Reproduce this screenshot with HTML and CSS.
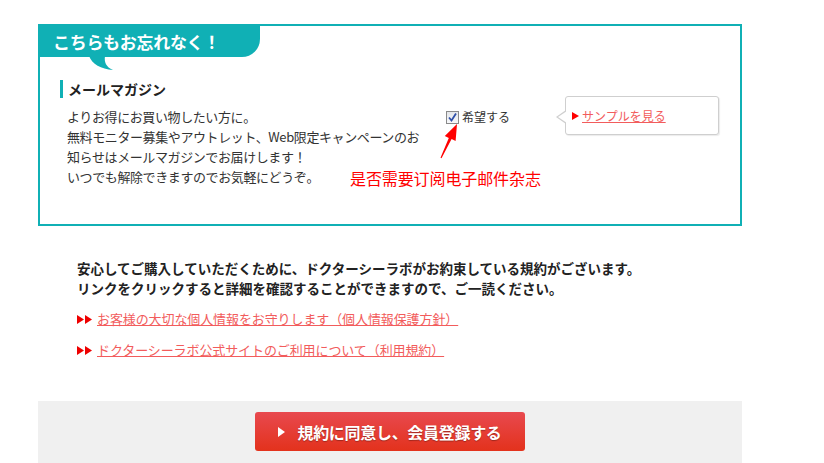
FILE: index.html
```html
<!DOCTYPE html>
<html lang="ja">
<head>
<meta charset="utf-8">
<title>メールマガジン</title>
<link rel="stylesheet" href="styles.css">
</head>
<body>
<div class="page">
  <div class="mm-box">
    <div class="badge">こちらもお忘れなく！</div>
    <svg class="badge-tail" width="26" height="16" viewBox="0 0 26 16"><path d="M0 0 C3 8 12 13 24 14 C17 11 15 6 16 0 Z" fill="#10b0b5"/></svg>
    <div class="mm-content">
      <h3 class="mm-title">メールマガジン</h3>
      <div class="mm-row">
        <p class="mm-text">よりお得にお買い物したい方に。<br>無料モニター募集やアウトレット、Web限定キャンペーンのお<br>知らせはメールマガジンでお届けします！<br>いつでも解除できますのでお気軽にどうぞ。</p>
        <label class="mm-check">
          <span class="cb"><svg width="11" height="11" viewBox="0 0 11 11"><path d="M2 5.5 L4.5 8.5 L9 1.5" fill="none" stroke="#2f4fa8" stroke-width="1.8"/></svg></span>希望する
        </label>
        <div class="sample">
          <span class="tri-red"></span><a href="#" class="sample-link">サンプルを見る</a>
        </div>
      </div>
    </div>
    <svg class="note-arrow" width="24" height="38" viewBox="0 0 24 38"><polygon points="19,2 17.6,19.1 13.6,17.1 3.5,36.2 2.5,35.8 10.8,15.9 6.8,13.9" fill="#ff0000"/></svg>
    <span class="note-text">是否需要订阅电子邮件杂志</span>
  </div>

  <div class="terms">
    <p class="terms-lead">安心してご購入していただくために、ドクターシーラボがお約束している規約がございます。<br>リンクをクリックすると詳細を確認することができますので、ご一読ください。</p>
    <ul class="terms-links">
      <li><span class="tri2"><svg width="16" height="9" viewBox="0 0 16 9"><polygon points="0,0 7,4.5 0,9" fill="#e00"/><polygon points="8,0 15,4.5 8,9" fill="#e00"/></svg></span><a href="#" class="terms-link">お客様の大切な個人情報をお守りします（個人情報保護方針）</a></li>
      <li><span class="tri2"><svg width="16" height="9" viewBox="0 0 16 9"><polygon points="0,0 7,4.5 0,9" fill="#e00"/><polygon points="8,0 15,4.5 8,9" fill="#e00"/></svg></span><a href="#" class="terms-link">ドクターシーラボ公式サイトのご利用について（利用規約）</a></li>
    </ul>
  </div>

  <div class="submit-band">
    <button class="submit-btn" type="button"><span class="tri-white"></span>規約に同意し、会員登録する</button>
  </div>
</div>
</body>
</html>
```

FILE: styles.css
```css
html, body {
  margin: 0;
  padding: 0;
  background: #fff;
}
body {
  font-family: "Noto Sans CJK JP", "Noto Sans", sans-serif;
  color: #333;
  font-size: 13px;
}
.page {
  width: 704px;
  margin-left: 38px;
  padding-top: 24px;
}
.mm-box {
  position: relative;
  border: 2px solid #10b0b5;
}
.badge {
  width: 207px;
  height: 31px;
  padding-left: 13px;
  background: #10b0b5;
  color: #fff;
  font-size: 17px;
  font-weight: bold;
  line-height: 31px;
  border-bottom-right-radius: 18px;
  letter-spacing: -0.3px;
}
.badge-tail {
  position: absolute;
  left: 49px;
  top: 30px;
}
.mm-content {
  padding: 23px 20px 37px 20px;
}
.mm-title {
  margin: 0;
  border-left: 3px solid #10b0b5;
  padding-left: 5px;
  font-size: 14px;
  font-weight: bold;
  line-height: 18px;
  color: #222;
}
.mm-row {
  display: flex;
  align-items: flex-start;
  margin-top: 9px;
}
.mm-text {
  margin: 0 0 0 7px;
  flex: 0 0 372px;
  font-size: 13px;
  line-height: 20px;
  white-space: nowrap;
  letter-spacing: -0.4px;
}
.mm-check {
  display: flex;
  align-items: center;
  margin-left: 7px;
  font-size: 12px;
  line-height: 20px;
  color: #333;
}
.cb {
  display: inline-flex;
  align-items: center;
  justify-content: center;
  width: 11px;
  height: 11px;
  border: 1px solid #8a8a8a;
  background: linear-gradient(#e4e6ea, #f7f8fa);
  margin-right: 3px;
}
.sample {
  position: relative;
  margin-left: 55px;
  margin-top: -11px;
  width: 146px;
  height: 37px;
  padding-left: 6px;
  border: 1px solid #cfcfcf;
  border-radius: 3px;
  background: #fff;
  box-shadow: 1px 1px 1px rgba(0,0,0,0.08);
  display: flex;
  align-items: center;
}
.sample::before {
  content: "";
  position: absolute;
  left: -10px;
  top: 13px;
  border-style: solid;
  border-width: 7px 10px 7px 0;
  border-color: transparent #cfcfcf transparent transparent;
}
.sample::after {
  content: "";
  position: absolute;
  left: -8px;
  top: 14px;
  border-style: solid;
  border-width: 6px 9px 6px 0;
  border-color: transparent #fff transparent transparent;
}
.tri-red {
  display: inline-block;
  width: 0;
  height: 0;
  border-style: solid;
  border-width: 4px 0 4px 7px;
  border-color: transparent transparent transparent #f00;
  margin-right: 3px;
}
.sample-link {
  font-size: 12px;
  color: #f25c5c;
  text-decoration: underline;
  line-height: 16px;
}
.note-arrow {
  position: absolute;
  left: 398px;
  top: 96px;
}
.note-text {
  position: absolute;
  left: 310px;
  top: 142px;
  font-family: "Noto Sans CJK SC", sans-serif;
  font-size: 16px;
  font-weight: normal;
  line-height: 20px;
  color: #f00;
  letter-spacing: -0.1px;
}
.terms {
  padding-left: 39px;
  margin-top: 32px;
}
.terms-lead {
  margin: 0;
  font-size: 13.5px;
  font-weight: bold;
  line-height: 20px;
  color: #222;
  white-space: nowrap;
}
.terms-links {
  list-style: none;
  margin: 11px 0 0 0;
  padding: 0;
}
.terms-links li {
  display: flex;
  align-items: center;
  line-height: 20px;
  margin-bottom: 11px;
}
.tri2 {
  display: inline-flex;
  margin-right: 4px;
}
.terms-link {
  font-size: 13px;
  color: #f25c5c;
  text-decoration: underline;
  letter-spacing: -0.1px;
}
.submit-band {
  margin-top: 41px;
  background: #f0f0f0;
  height: 62px;
  padding-top: 11px;
  box-sizing: border-box;
  display: flex;
  justify-content: center;
}
.submit-btn {
  width: 270px;
  height: 39px;
  border: none;
  border-radius: 3px;
  background: linear-gradient(#e8494f, #e3321c);
  color: #fff;
  font-family: "Noto Sans CJK JP", sans-serif;
  font-size: 16px;
  font-weight: bold;
  text-shadow: 0 1px 1px rgba(0,0,0,0.3);
  display: flex;
  align-items: center;
  justify-content: center;
  padding: 0;
  letter-spacing: -0.3px;
}
.tri-white {
  display: inline-block;
  width: 0;
  height: 0;
  border-style: solid;
  border-width: 5px 0 5px 7px;
  border-color: transparent transparent transparent #fff;
  margin-right: 12px;
}
```
